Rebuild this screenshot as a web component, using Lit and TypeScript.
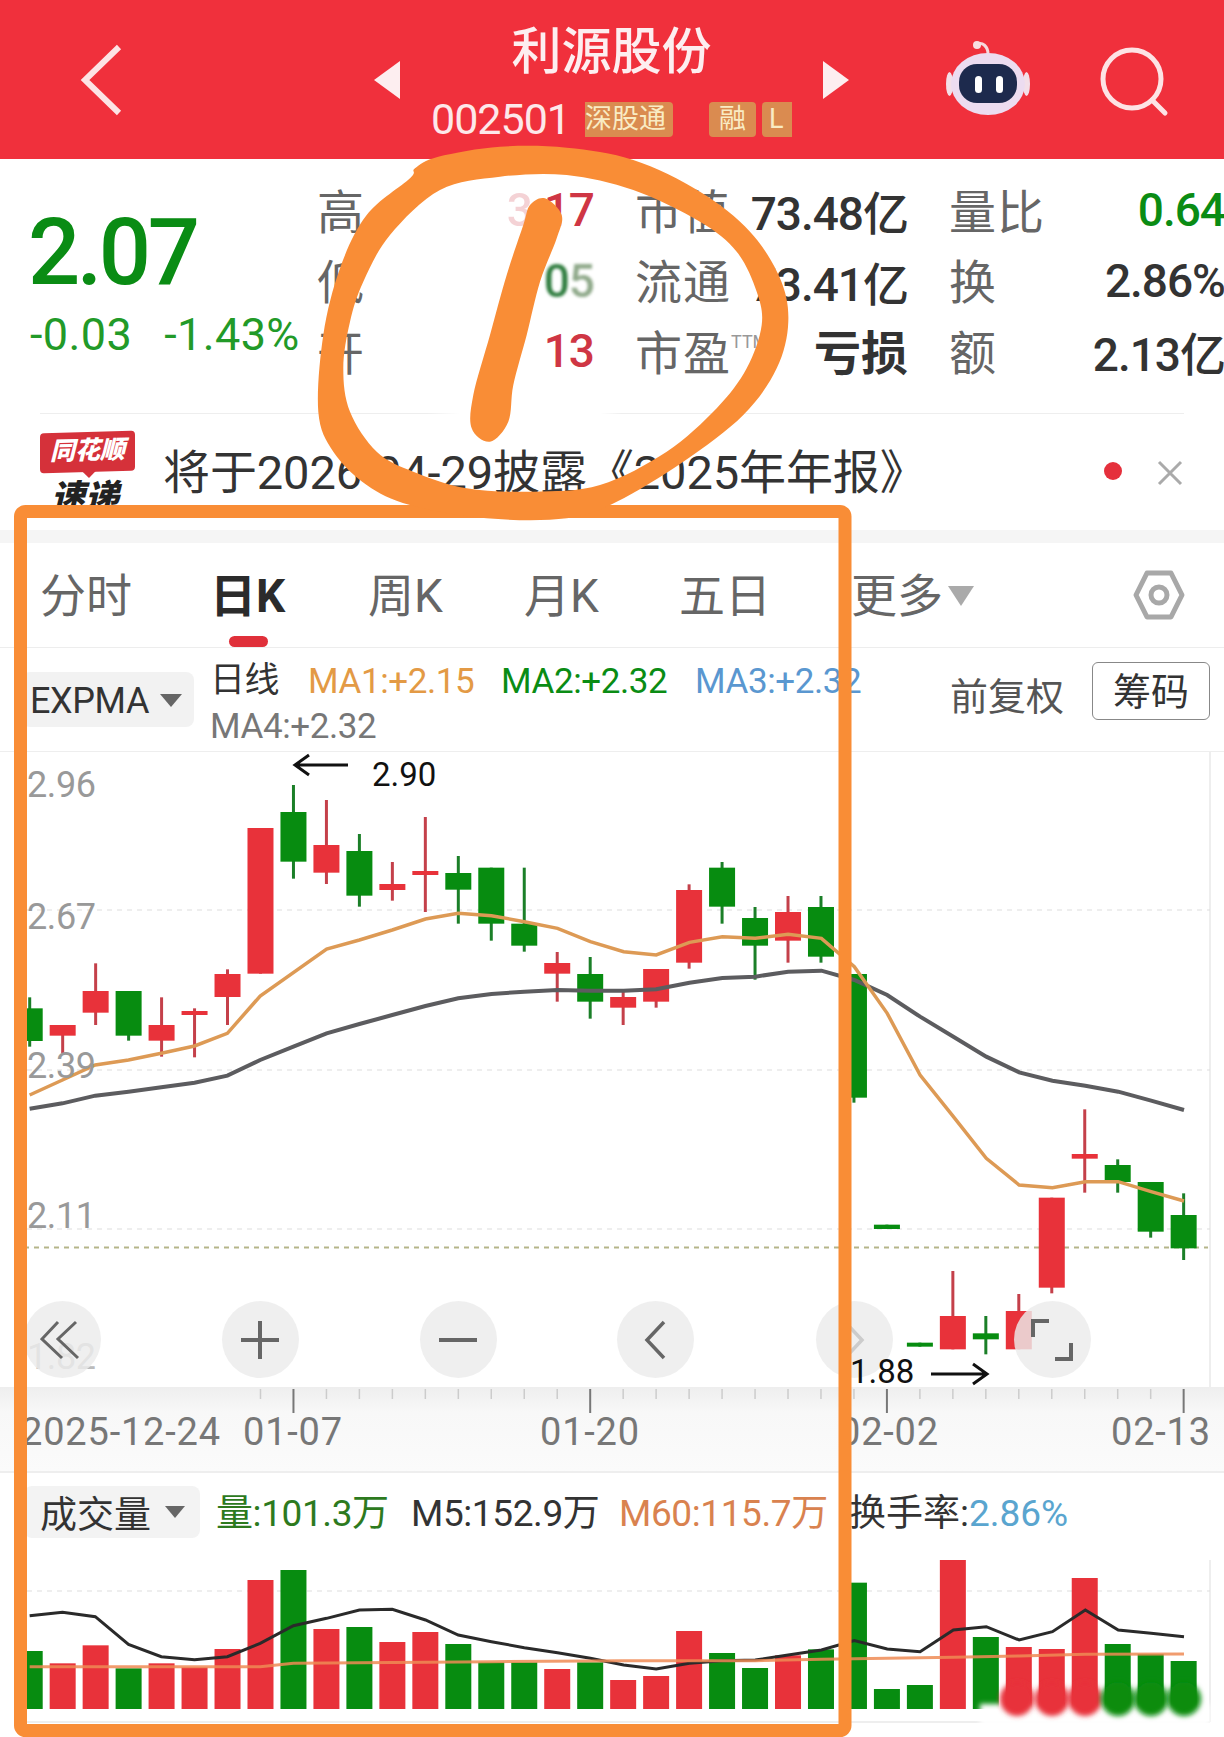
import { LitElement, html, css, svg } from "lit";
import { customElement } from "lit/decorators.js";

const X = (i: number) => 29.7 + 32.97 * i;
const Y = (z: number) => 750 + z / 3;
const Y2 = (z: number) => 1250 + z / 3;

type C = [string, number, number, number, number];
const candles: C[] = [
  ["g", Y(742), Y(775), Y(873), Y(890)],
  ["r", Y(825), Y(825), Y(857), Y(910)],
  ["r", Y(640), Y(723), Y(788), Y(825)],
  ["g", Y(723), Y(723), Y(857), Y(872)],
  ["r", Y(742), Y(825), Y(872), Y(920)],
  ["r", Y(775), Y(783), Y(795), Y(922)],
  ["r", Y(658), Y(672), Y(741), Y(825)],
  ["r", Y(234), Y(234), Y(671), Y(671)],
  ["g", Y(105), Y(186), Y(335), Y(386)],
  ["r", Y(150), Y(285), Y(368), Y(402)],
  ["g", Y(252), Y(303), Y(437), Y(470)],
  ["r", Y(336), Y(402), Y(420), Y(452)],
  ["r", Y(201), Y(363), Y(375), Y(486)],
  ["g", Y(318), Y(369), Y(419), Y(521)],
  ["g", Y(353), Y(353), Y(521), Y(572)],
  ["g", Y(353), Y(521), Y(587), Y(605)],
  ["r", Y(606), Y(639), Y(671), Y(755)],
  ["g", Y(621), Y(672), Y(755), Y(806)],
  ["r", Y(725), Y(741), Y(773), Y(825)],
  ["r", Y(657), Y(657), Y(755), Y(773)],
  ["r", Y(403), Y(420), Y(638), Y(656)],
  ["g", Y(336), Y(353), Y(470), Y(521)],
  ["g", Y(471), Y(504), Y(587), Y(689)],
  ["r", Y(438), Y(486), Y(572), Y(638)],
  ["g", Y(438), Y(471), Y(620), Y(638)],
  ["g", Y(672), Y(672), Y(1043), Y(1058)],
  ["g", Y(1424), Y(1424), Y(1437), Y(1437)],
  ["g", Y2(278), Y2(278), Y2(290), Y2(290)],
  ["r", Y2(63), Y2(198), Y2(298), Y2(298)],
  ["g", Y2(198), Y2(250), Y2(268), Y2(313)],
  ["r", Y2(132), Y2(183), Y2(298), Y2(298)],
  ["r", Y(1343), Y(1343), Y2(113), Y2(130)],
  ["r", Y(1078), Y(1212), Y(1226), Y(1328)],
  ["g", Y(1228), Y(1245), Y(1296), Y(1328)],
  ["g", Y(1296), Y(1296), Y(1445), Y(1463)],
  ["g", Y(1330), Y(1395), Y(1495), Y2(30)],
];

const zx3 = (z: number) => z / 2.529;
const zx4 = (z: number) => 610 + z / 2.554;
const line = (a: number[][], b: number[][], fy: (z: number) => number) =>
  [...a.map((p) => `${zx3(p[0])},${fy(p[1])}`), ...b.map((p) => `${zx4(p[0])},${fy(p[1])}`)].join(" ");

const orangeLine = line(
  [[75,1035],[158,990],[241,945],[325,930],[408,910],[492,888],[575,850],[658,738],[826,597],[909,570],[992,540],[1076,507],[1159,490],[1243,497],[1326,515],[1410,535],[1493,575]],
  [[35,605],[118,615],[203,577],[287,560],[371,565],[455,553],[540,565],[624,650],[708,790],[792,975],[877,1100],[961,1225],[1045,1305],[1130,1313],[1214,1295],[1298,1295],[1382,1325],[1466,1353]],
  Y
);
const grayLine = line(
  [[75,1076],[158,1060],[241,1037],[325,1025],[408,1012],[492,998],[575,977],[658,930],[742,890],[826,850],[909,822],[992,795],[1076,768],[1159,745],[1243,732],[1326,725],[1410,720],[1493,722]],
  [[35,722],[118,718],[203,698],[287,684],[371,680],[455,665],[540,662],[624,690],[708,735],[792,800],[877,860],[961,920],[1045,967],[1130,992],[1214,1007],[1298,1025],[1382,1052],[1466,1080]],
  Y
);
const volBlack = line(
  [[75,1097],[158,1087],[241,1100],[325,1183],[408,1220],[492,1229],[575,1220],[658,1180],[742,1127],[826,1105],[909,1080],[992,1078],[1076,1110],[1159,1155],[1243,1175],[1326,1193],[1410,1208],[1493,1225]],
  [[35,1245],[118,1257],[203,1240],[287,1232],[371,1230],[455,1215],[540,1200],[624,1172],[708,1197],[792,1205],[877,1140],[961,1130],[1045,1170],[1130,1145],[1214,1080],[1298,1140],[1382,1150],[1466,1160]],
  Y2
);
const volOrange = line(
  [[75,1250],[575,1250],[658,1250],[742,1240],[909,1238],[1243,1235]],
  [[35,1232],[371,1232],[540,1228],[877,1222],[1045,1218],[1214,1213],[1466,1212]],
  Y2
);

const volTops = [1203,1240,1186,1255,1240,1252,1197,990,960,1137,1131,1176,1146,1182,1237,1237,1257,1237,1290,1278,1143,1209,1254,1216,1198,998,1317,1305,880,1161,1191,1197,984,1182,1212,1233];

const RED = "#e8323a";
const GREEN = "#078c10";
const WRED = "#c4404a";
const WGREEN = "#1b7f28";
const majorTicks = [8, 17, 26, 35];

// closed smooth curve through hand-stroke outline points (crop units: 3 per px, origin 300,135)
const smooth = (pts: number[][]) => {
  const p = pts.map(([x, y]) => [300 + x / 3, 135 + y / 3]);
  const n = p.length;
  let d = `M${p[0][0].toFixed(1)} ${p[0][1].toFixed(1)}`;
  for (let i = 0; i < n; i++) {
    const a = p[(i - 1 + n) % n], b = p[i], c = p[(i + 1) % n], e = p[(i + 2) % n];
    const c1 = [b[0] + (c[0] - a[0]) / 6, b[1] + (c[1] - a[1]) / 6];
    const c2 = [c[0] - (e[0] - b[0]) / 6, c[1] - (e[1] - b[1]) / 6];
    d += ` C${c1[0].toFixed(1)} ${c1[1].toFixed(1)} ${c2[0].toFixed(1)} ${c2[1].toFixed(1)} ${c[0].toFixed(1)} ${c[1].toFixed(1)}`;
  }
  return d + " Z";
};
const ringPath =
  smooth([[345,100],[415,65],[600,35],[800,38],[1000,75],[1200,170],[1350,290],[1440,430],[1465,560],[1430,700],[1330,840],[1150,980],[950,1100],[800,1150],[560,1150],[330,1110],[200,1050],[100,950],[55,830],[70,600],[120,400],[200,240],[330,130]]) +
  " " +
  smooth([[420,165],[600,125],[800,120],[1000,165],[1200,260],[1310,350],[1370,470],[1385,570],[1340,700],[1250,820],[1100,950],[900,1050],[700,1070],[500,1060],[340,1010],[230,950],[150,830],[130,700],[150,560],[190,440],[270,300]]);
const slashPath = smooth([[690,210],[735,190],[785,240],[770,310],[720,440],[680,600],[640,750],[625,860],[570,920],[515,880],[520,780],[570,600],[620,420],[670,270]]);

@customElement("app-root")
export class AppRoot extends LitElement {
  static styles = css`
    :host {
      display: block;
      width: 1224px;
      height: 1737px;
      position: relative;
      overflow: hidden;
      background: #fff;
      font-family: Roboto, "Noto Sans CJK SC", sans-serif;
      color: #333;
    }
    svg { display: block; }

    .header {
      height: 159px;
      background: #f0303c;
      display: grid;
      grid-template-columns: 374px 26px 423px 26px 1fr;
      align-items: center;
      color: #fff;
    }
    .back { margin-left: 80px; }
    .center { display: flex; flex-direction: column; align-items: center; align-self: start; padding-top: 21px; }
    .title { font-size: 50px; font-weight: 500; line-height: 62px; color: #fdeef0; }
    .codes { display: flex; align-items: center; height: 40px; margin-top: 16px; }
    .code { font-size: 43px; letter-spacing: -1px; color: #fde8ea; margin-right: 15px; line-height: 52px; }
    .badge {
      background: #da8b50;
      color: #f9ebc4;
      font-size: 27px;
      height: 35px;
      line-height: 35px;
      border-radius: 4px;
      white-space: nowrap;
    }
    .b1 { width: 88px; margin-right: 36px; border-radius: 0 4px 4px 0; }
    .b2 { width: 47px; text-align: center; margin-right: 6px; }
    .b3 { width: 30px; padding-left: 7px; box-sizing: border-box; border-radius: 4px 0 0 4px; }
    .tools { display: flex; align-items: center; margin-left: 97px; gap: 70px; margin-top: 4px; }
    .robot { margin-top: -8px; }

    .quote { height: 254px; display: flex; box-sizing: border-box; padding-top: 14px; }
    .price { width: 317px; flex: none; padding-left: 28px; box-sizing: border-box; color: #0a8c14; }
    .last { font-size: 92px; font-weight: 500; line-height: 92px; margin-top: 34px; letter-spacing: -3.5px; }
    .chg { display: flex; gap: 32px; font-size: 45px; line-height: 50px; margin: 11px 0 0 2px; color: #229a28; letter-spacing: 0.4px; white-space: nowrap; }
    .stats { display: grid; grid-template-columns: 277px 273px 276px; column-gap: 41px; grid-auto-rows: 70.5px; flex: none; width: 907px; }
    .cell { display: flex; align-items: center; justify-content: space-between; white-space: nowrap; }
    .lab { font-size: 47px; color: #666; letter-spacing: 1px; }
    .val { font-size: 46px; font-weight: 500; color: #333; letter-spacing: -1px; padding-top: 4px; }
    .up { color: #cf3644; }
    .dn { color: #0a8c14; }
    .faded { opacity: 0.22; }
    .smudge { filter: blur(1.6px); }
    .sm1 { color: #2f7d3f; }
    .sm2 { color: #8fa98a; }
    .loss { font-weight: 700; font-size: 47px; letter-spacing: 0; padding-top: 0; }
    .ttm { font-size: 18px; color: #999; vertical-align: 22px; letter-spacing: 0; }

    .notice {
      height: 117px;
      position: relative;
      display: flex;
      align-items: flex-start;
      overflow: hidden;
    }
    .notice::before {
      content: "";
      position: absolute;
      top: 0;
      left: 40px;
      right: 40px;
      height: 1px;
      background: linear-gradient(90deg, #eee 0, #eee 387px, #fff 420px, #fff 560px, #eee 582px);
    }
    .logo { margin: 19px 0 0 40px; width: 123px; flex: none; }
    .tag {
      position: relative;
      width: 95px;
      height: 40px;
      background: #d5313a;
      border-radius: 4px;
      color: #fff;
      font-size: 25px;
      font-style: italic;
      font-weight: 900;
      line-height: 38px;
      text-align: center;
      white-space: nowrap;
      transform: skewY(-1.5deg);
    }
    .tag::after {
      content: "";
      position: absolute;
      left: 42px;
      top: 39px;
      border-left: 7px solid transparent;
      border-right: 7px solid transparent;
      border-top: 7px solid #d5313a;
    }
    .sd { width: 90px; font-size: 34px; font-style: italic; font-weight: 900; color: #222; text-align: center; line-height: 36px; margin-top: 7px; }
    .ntext { font-size: 47px; color: #333; line-height: 60px; margin-top: 30px; letter-spacing: -0.1px; white-space: nowrap; flex: 1; }
    .dot { width: 18px; height: 18px; border-radius: 50%; background: #e5303c; margin: 49px 0 0 0; flex: none; }
    .close { margin: 46px 40px 0 34px; flex: none; }

    .band { height: 13px; background: #f5f5f5; }

    .tabs { height: 105px; position: relative; border-bottom: 1px solid #ededed; box-sizing: border-box; }
    .tab { font-size: 46px; color: #666; position: absolute; top: 25px; line-height: 56px; white-space: nowrap; }
    .tab.on { color: #2b2b2b; font-weight: 700; }
    .pill { position: absolute; left: 229px; top: 93px; width: 39px; height: 11px; border-radius: 6px; background: #e0303a; }
    .tri { position: absolute; left: 948px; top: 43px; }
    .gear { position: absolute; left: 1133px; top: 27px; }

    .ma { height: 104px; position: relative; border-bottom: 1px solid #eee; box-sizing: border-box; }
    .chip {
      position: absolute;
      left: 22px;
      top: 24px;
      width: 172px;
      height: 55px;
      border-radius: 8px;
      background: #f2f2f2;
      display: flex;
      align-items: center;
      padding: 2px 0 0 8px;
      box-sizing: border-box;
      font-size: 36px;
      color: #333;
      letter-spacing: -0.4px;
      gap: 11px;
    }
    .mat { position: absolute; font-size: 35px; line-height: 40px; white-space: nowrap; letter-spacing: -0.4px; }
    .fq { position: absolute; left: 950px; top: 24px; font-size: 38px; line-height: 50px; color: #555; }
    .cm {
      position: absolute;
      left: 1092px;
      top: 14px;
      width: 118px;
      height: 58px;
      border: 1px solid #888;
      border-radius: 6px;
      box-sizing: border-box;
      text-align: center;
      font-size: 38px;
      line-height: 58px;
      color: #333;
    }

    .chart { height: 635px; position: relative; }
    .btn {
      position: absolute;
      top: 549px;
      width: 77px;
      height: 77px;
      margin-left: -38.5px;
      border-radius: 50%;
      background: rgba(236, 236, 236, 0.82);
      display: flex;
      align-items: center;
      justify-content: center;
    }

    .dates {
      height: 86px;
      position: relative;
      background: linear-gradient(#eeeeee, #f8f8f8 30%, #fbfbfb);
      border-bottom: 2px solid #eee;
      box-sizing: border-box;
    }
    .date { position: absolute; top: 22px; font-size: 38px; line-height: 46px; color: #777; letter-spacing: 0.8px; white-space: nowrap; }

    .vhead { height: 87px; position: relative; font-size: 37px; white-space: nowrap; }
    .vchip {
      position: absolute;
      left: 24px;
      top: 13px;
      width: 176px;
      height: 52px;
      border-radius: 8px;
      background: #f3f3f3;
      display: flex;
      align-items: center;
      box-sizing: border-box;
      padding-left: 16px;
      gap: 14px;
      color: #333;
    }
    .vt { position: absolute; top: 16px; line-height: 50px; letter-spacing: -0.4px; }
    .vt.wide { letter-spacing: 0; }

    .vchart { height: 177px; }
    .overlay { position: absolute; left: 0; top: 0; pointer-events: none; }
  `;

  private candleSvg() {
    return candles.map((c, i) => {
      const x = X(i);
      const col = c[0] === "r" ? RED : GREEN;
      const wick = c[0] === "r" ? WRED : WGREEN;
      return svg`
        <line x1=${x} x2=${x} y1=${c[1]} y2=${c[4]} stroke=${wick} stroke-width="3"></line>
        <rect x=${x - 13} y=${c[2]} width="26" height=${c[3] - c[2]} fill=${col}></rect>`;
    });
  }

  render() {
    const yl = (t: string, y: number, fill = "#999") =>
      svg`<text x="27" y=${y} font-size="36" fill=${fill} letter-spacing="-0.4">${t}</text>`;
    return html`
      <div class="header">
        <svg class="back" width="44" height="72" viewBox="0 0 44 72"><path d="M39 3 L5 36 L39 69" fill="none" stroke="#fde3e5" stroke-width="6"/></svg>
        <svg width="26" height="38" viewBox="0 0 26 38"><path d="M0 19 L26 0 V38 Z" fill="#fdeef0"/></svg>
        <div class="center">
          <div class="title">利源股份</div>
          <div class="codes">
            <span class="code">002501</span>
            <span class="badge b1">深股通</span>
            <span class="badge b2">融</span>
            <span class="badge b3">L</span>
          </div>
        </div>
        <svg width="26" height="38" viewBox="0 0 26 38"><path d="M26 19 L0 0 V38 Z" fill="#fdeef0"/></svg>
        <div class="tools">
          <svg class="robot" width="84" height="76" viewBox="0 0 84 76">
            <path d="M42 14 C42 6 36 2 32 4" fill="none" stroke="#f6d9dd" stroke-width="3"/>
            <circle cx="31" cy="5" r="4" fill="#f8dfe2"/>
            <ellipse cx="3.5" cy="44" rx="3.5" ry="12" fill="#f3dfe8"/>
            <ellipse cx="80.5" cy="44" rx="3.5" ry="12" fill="#f3dfe8"/>
            <ellipse cx="42" cy="44" rx="37" ry="31" fill="#ecdcf0"/>
            <rect x="13" y="24" width="58" height="39" rx="18" fill="#1d2a4d"/>
            <rect x="29" y="36" width="7" height="17" rx="3.5" fill="#fff"/>
            <rect x="50" y="36" width="7" height="17" rx="3.5" fill="#fff"/>
          </svg>
          <svg width="70" height="70" viewBox="0 0 70 70">
            <circle cx="32" cy="32" r="29" fill="none" stroke="#fde3e5" stroke-width="5"/>
            <path d="M52 53 L65 66" stroke="#fde3e5" stroke-width="5" stroke-linecap="round"/>
          </svg>
        </div>
      </div>

      <div class="quote">
        <div class="price">
          <div class="last">2.07</div>
          <div class="chg"><span>-0.03</span><span>-1.43%</span></div>
        </div>
        <div class="stats">
          <div class="cell"><span class="lab">高</span><span class="val up"><span class="faded">3</span>.17</span></div>
          <div class="cell"><span class="lab">市值</span><span class="val">73.48亿</span></div>
          <div class="cell"><span class="lab">量比</span><span class="val dn">0.64</span></div>
          <div class="cell"><span class="lab">低</span><span class="val smudge"><span class="sm1">0</span><span class="sm2">5</span></span></div>
          <div class="cell"><span class="lab">流通</span><span class="val">73.41亿</span></div>
          <div class="cell"><span class="lab">换</span><span class="val">2.86%</span></div>
          <div class="cell"><span class="lab">开</span><span class="val up">13</span></div>
          <div class="cell"><span class="lab">市盈<span class="ttm">TTM</span></span><span class="val loss">亏损</span></div>
          <div class="cell"><span class="lab">额</span><span class="val">2.13亿</span></div>
        </div>
      </div>

      <div class="notice">
        <div class="logo">
          <div class="tag">同花顺</div>
          <div class="sd">速递</div>
        </div>
        <div class="ntext">将于2026-04-29披露《2025年年报》</div>
        <div class="dot"></div>
        <svg class="close" width="28" height="28" viewBox="0 0 28 28"><path d="M3 3 L25 25 M25 3 L3 25" stroke="#aaa" stroke-width="3"/></svg>
      </div>
      <div class="band"></div>

      <div class="tabs">
        <span class="tab" style="left:40px">分时</span>
        <span class="tab on" style="left:210px">日K</span>
        <span class="tab" style="left:368px">周K</span>
        <span class="tab" style="left:524px">月K</span>
        <span class="tab" style="left:679px">五日</span>
        <span class="tab" style="left:851px">更多</span>
        <svg class="tri" width="26" height="20" viewBox="0 0 26 20"><path d="M0 0 H26 L13 20 Z" fill="#aaa"/></svg>
        <svg class="gear" width="52" height="50" viewBox="0 0 52 50">
          <path d="M14 3 H38 L49 25 L38 47 H14 L3 25 Z" fill="none" stroke="#a8a8a8" stroke-width="5" stroke-linejoin="round"/>
          <circle cx="26" cy="25" r="8" fill="none" stroke="#a8a8a8" stroke-width="5"/>
        </svg>
        <div class="pill"></div>
      </div>

      <div class="ma">
        <div class="chip">EXPMA<svg width="22" height="13" viewBox="0 0 22 13"><path d="M0 0 H22 L11 13 Z" fill="#666"/></svg></div>
        <span class="mat" style="left:210px;top:13px;color:#333">日线</span>
        <span class="mat" style="left:308px;top:14px;color:#e39a45">MA1:+2.15</span>
        <span class="mat" style="left:501px;top:14px;color:#0a8c14">MA2:+2.32</span>
        <span class="mat" style="left:695px;top:14px;color:#5a97d0">MA3:+2.32</span>
        <span class="mat" style="left:210px;top:59px;color:#777">MA4:+2.32</span>
        <span class="fq">前复权</span>
        <span class="cm">筹码</span>
      </div>

      <div class="chart">
        <svg width="1224" height="635" viewBox="0 752 1224 635">
          <line x1="1210" x2="1210" y1="752" y2="1387" stroke="#eee" stroke-width="2"></line>
          ${[910, 1070, 1229].map((y) => svg`<line x1="27" x2="1210" y1=${y} y2=${y} stroke="#ddd" stroke-width="1" stroke-dasharray="5 5"></line>`)}
          <line x1="14" x2="1208" y1="1247.5" y2="1247.5" stroke="#b5b58a" stroke-width="2" stroke-dasharray="5 5"></line>
          ${this.candleSvg()}
          <polyline points=${grayLine} fill="none" stroke="#5c5c5f" stroke-width="4"></polyline>
          <polyline points=${orangeLine} fill="none" stroke="#dd9a55" stroke-width="3.5"></polyline>
          ${yl("2.96", 797)}
          ${yl("2.67", 929)}
          ${yl("2.39", 1078)}
          ${yl("2.11", 1228)}
          ${yl("1.82", 1369, "#bbb")}
        </svg>
        <div class="btn" style="left:62px">
          <svg width="44" height="44" viewBox="0 0 44 44"><path d="M18 4 L2 21 L22 40 M36 4 L18 21 L38 40" fill="none" stroke="#666" stroke-width="3"/></svg>
        </div>
        <div class="btn" style="left:260px">
          <svg width="38" height="38" viewBox="0 0 38 38"><path d="M0 19 H38 M19 0 V38" stroke="#666" stroke-width="4"/></svg>
        </div>
        <div class="btn" style="left:458px">
          <svg width="38" height="6" viewBox="0 0 38 6"><path d="M0 3 H38" stroke="#666" stroke-width="4"/></svg>
        </div>
        <div class="btn" style="left:655px">
          <svg width="22" height="40" viewBox="0 0 22 40"><path d="M20 2 L3 20 L20 38" fill="none" stroke="#666" stroke-width="3.5"/></svg>
        </div>
        <div class="btn" style="left:854px">
          <svg width="22" height="40" viewBox="0 0 22 40"><path d="M2 2 L19 20 L2 38" fill="none" stroke="#ccc" stroke-width="3.5"/></svg>
        </div>
        <div class="btn" style="left:1052px">
          <svg width="42" height="42" viewBox="0 0 42 42"><path d="M2 18 V2 H18 M40 24 V40 H24" fill="none" stroke="#666" stroke-width="4"/></svg>
        </div>
      </div>

      <div class="dates">
        <svg style="position:absolute;left:0;top:0" width="1224" height="30" viewBox="0 0 1224 30">
          ${candles.map((_, i) => {
            if (i < 7) return "";
            const major = majorTicks.includes(i);
            return svg`<line x1=${X(i)} x2=${X(i)} y1="2" y2=${major ? 26 : 12} stroke=${major ? "#777" : "#ccc"} stroke-width=${major ? 2 : 1.5}></line>`;
          })}
        </svg>
        <span class="date" style="left:21px">2025-12-24</span>
        <span class="date" style="left:243px">01-07</span>
        <span class="date" style="left:540px">01-20</span>
        <span class="date" style="left:839px">02-02</span>
        <span class="date" style="left:1111px">02-13</span>
      </div>

      <div class="vhead">
        <div class="vchip">成交量<svg width="20" height="12" viewBox="0 0 20 12"><path d="M0 0 H20 L10 12 Z" fill="#666"/></svg></div>
        <span class="vt" style="left:216px;color:#2d7a1e">量:101.3万</span>
        <span class="vt" style="left:411px;color:#333">M5:152.9万</span>
        <span class="vt" style="left:619px;color:#d9824f">M60:115.7万</span>
        <span class="vt wide" style="left:849px;color:#333">换手率:<span style="color:#5aa5cf">2.86%</span></span>
      </div>

      <div class="vchart">
        <svg width="1224" height="177" viewBox="0 1560 1224 177">
          <defs><filter id="bl" x="-20%" y="-50%" width="140%" height="200%"><feGaussianBlur stdDeviation="2.5"></feGaussianBlur></filter></defs>
          <line x1="1210" x2="1210" y1="1560" y2="1722" stroke="#eee" stroke-width="2"></line>
          <line x1="27" x2="1210" y1="1722" y2="1722" stroke="#eee" stroke-width="2"></line>
          <line x1="27" x2="1210" y1="1591" y2="1591" stroke="#ddd" stroke-width="1" stroke-dasharray="5 5"></line>
          ${volTops.map((t, i) => {
            const y = Y2(t);
            const col = candles[i][0] === "r" ? RED : GREEN;
            return svg`<rect x=${X(i) - 13} y=${y} width="26" height=${1709 - y} fill=${col}></rect>`;
          })}
          <polyline points=${volBlack} fill="none" stroke="#2a2a2a" stroke-width="3"></polyline>
          <polyline points=${volOrange} fill="none" stroke="#ef8b55" stroke-width="3" opacity="0.85"></polyline>
          <rect x="980" y="1704" width="230" height="22" fill="#fff" filter="url(#bl)"></rect>
          ${[[1017, RED], [1052, RED], [1085, RED], [1118, GREEN], [1151, GREEN], [1184, GREEN]].map(
            (b) => svg`<circle cx=${b[0]} cy="1699" r="17" fill=${b[1]} filter="url(#bl)"></circle>`
          )}
        </svg>
      </div>

      <svg class="overlay" width="1224" height="1737" viewBox="0 0 1224 1737">
        <rect x="20.5" y="511.5" width="824.5" height="1219" rx="5" fill="none" stroke="#f98d36" stroke-width="13"></rect>
        <path d=${ringPath} fill="#f98d36" fill-rule="evenodd"></path>
        <path d=${slashPath} fill="#f98d36"></path>
        <g fill="none" stroke="#111" stroke-width="3">
          <path d="M295 765 H348 M309 755 L295 765 L309 775"></path>
          <path d="M931 1374 H987 M973 1364 L987 1374 L973 1384"></path>
        </g>
        <text x="372" y="786" font-size="33" fill="#111">2.90</text>
        <text x="850" y="1383" font-size="33" fill="#111">1.88</text>
      </svg>
    `;
  }
}
